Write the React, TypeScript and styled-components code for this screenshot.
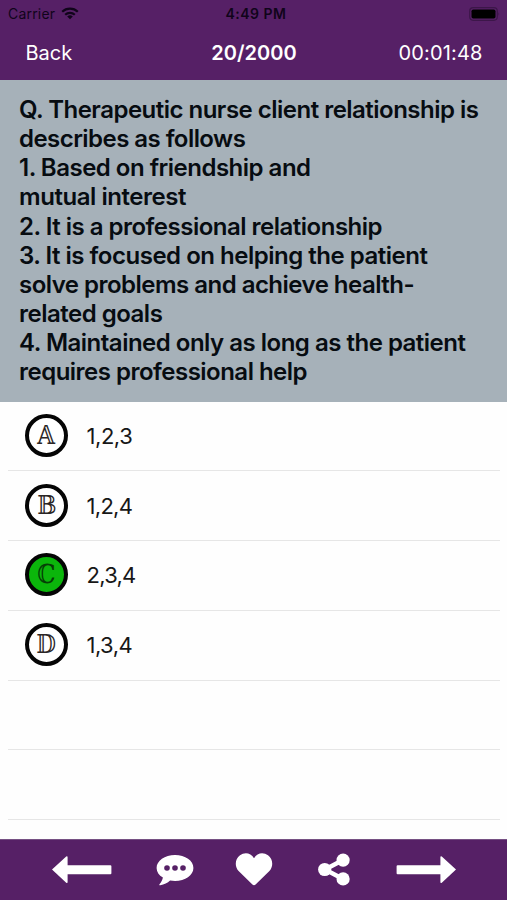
import React from 'react';
import styled, { createGlobalStyle, css } from 'styled-components';

const purple = '#562066';

const GlobalStyle = createGlobalStyle`
  * { box-sizing: border-box; }
  body { margin: 0; background: #fff; overflow: hidden; }
`;

const Screen = styled.main`
  width: 507px;
  height: 900px;
  display: flex;
  flex-direction: column;
  overflow: hidden;
  background: #fefefe;
  font-family: Inter, "Liberation Sans", sans-serif;
`;

const StatusBar = styled.header`
  flex: 0 0 27px;
  display: grid;
  grid-template-columns: 1fr auto 1fr;
  align-items: center;
  padding: 0 7px 0 8px;
  background: ${purple};
  color: #10041a;
  font-size: 14px;
`;

const Carrier = styled.div`
  display: flex;
  align-items: center;
  gap: 6px;
  letter-spacing: 0.2px;
`;

const Clock = styled.time`
  padding-left: 4px;
  font-weight: 600;
  letter-spacing: 0.5px;
`;

const Battery = styled.svg`
  justify-self: end;
  display: block;
`;

const NavBar = styled.nav`
  flex: 0 0 52.5px;
  display: grid;
  grid-template-columns: 1fr auto 1fr;
  align-items: center;
  padding: 0 24.5px 0 25.5px;
  background: ${purple};
  color: #fff;
  font-size: 20px;
`;

const BackButton = styled.button`
  justify-self: start;
  padding: 0;
  border: 0;
  background: none;
  color: inherit;
  font: inherit;
`;

const Progress = styled.h1`
  margin: 0;
  font-size: 20px;
  font-weight: 600;
  letter-spacing: 0.05px;
`;

const Timer = styled.time`
  justify-self: end;
  letter-spacing: 0.15px;
`;

const Question = styled.section`
  flex: 0 0 322px;
  padding: 15.5px 19px 0;
  background: #a6b1b9;
  color: #070c11;
  font-size: 24px;
  font-weight: 600;
  line-height: 29.15px;
`;

const QuestionLine = styled.div<{ $tracking: number }>`
  white-space: nowrap;
  letter-spacing: ${({ $tracking }) => $tracking}px;
`;

const AnswerList = styled.ul`
  flex: 1;
  min-height: 0;
  margin: 0;
  padding: 0 7px 0 8px;
  list-style: none;
  overflow: hidden;
`;

const AnswerRow = styled.li`
  height: 69.75px;
  display: flex;
  align-items: center;
  gap: 18.5px;
  padding: 0 0 1px 17px;
  border-bottom: 1px solid #e6e6e6;
`;

const Badge = styled.span<{ $selected: boolean }>`
  width: 43px;
  height: 43px;
  flex: none;
  display: flex;
  align-items: center;
  justify-content: center;
  border: 4px solid #050505;
  border-radius: 50%;
  background: #fff;
  color: #2b2626;
  font: 26px/35px "DejaVu Serif", serif;
  ${({ $selected }) =>
    $selected &&
    css`
      background: #0bb60b;
      color: #063f06;
    `}
`;

const Letter = styled.span`
  transform: scaleX(0.88);
`;

const AnswerText = styled.span<{ $tracking: number }>`
  padding-top: 1px;
  color: #171717;
  font-size: 22px;
  letter-spacing: ${({ $tracking }) => $tracking}px;
`;

const Toolbar = styled.footer`
  flex: 0 0 61.5px;
  display: flex;
  align-items: center;
  gap: 43.5px;
  padding: 0 0 0 51px;
  background: ${purple};
  border-top: 1px solid #765083;
`;

const ToolButton = styled.button`
  display: flex;
  padding: 0;
  border: 0;
  background: none;
  color: #fff;

  &:nth-child(3) { margin-left: -2.5px; }
  &:nth-child(4) { margin-left: 1.5px; }
  &:nth-child(5) { margin-left: 2.5px; }
`;

const questionLines: { text: string; tracking: number }[] = [
  { text: 'Q. Therapeutic nurse client relationship is', tracking: -0.51 },
  { text: 'describes as follows', tracking: -0.55 },
  { text: '1. Based on friendship and', tracking: -0.5 },
  { text: 'mutual interest', tracking: -0.454 },
  { text: '2. It is a professional relationship', tracking: -0.5 },
  { text: '3. It is focused on helping the patient', tracking: -0.487 },
  { text: 'solve problems and achieve health-', tracking: -0.52 },
  { text: 'related goals', tracking: -0.5 },
  { text: '4. Maintained only as long as the patient', tracking: -0.5 },
  { text: 'requires professional help', tracking: -0.51 },
];

const answers = [
  { letter: 'A', glyph: '𝔸', text: '1,2,3', tracking: -0.45 },
  { letter: 'B', glyph: '𝔹', text: '1,2,4', tracking: -0.7 },
  { letter: 'C', glyph: 'ℂ', text: '2,3,4', tracking: -0.75, selected: true },
  { letter: 'D', glyph: '𝔻', text: '1,3,4', tracking: -0.55 },
];

const WifiIcon = () => (
  <svg width="18" height="13" viewBox="0 0 18 13" fill="none" stroke="#10041a" strokeWidth="2.2">
    <path d="M1.2 4.7a11.2 11.2 0 0 1 15.6 0" />
    <path d="M4.2 7.8a7 7 0 0 1 9.6 0" />
    <path d="M9 12.2 6.2 9.6a4 4 0 0 1 5.6 0Z" fill="#10041a" stroke="none" />
  </svg>
);

const ArrowLeft = () => (
  <svg width="61" height="28" viewBox="0 0 61 28" fill="currentColor">
    <path d="M1 13.5 15.2.4q1.4-.8 1.4.8v8h42.8q1 0 1 1v7q0 1-1 1H16.6v7.9q0 1.5-1.4.6Z" />
  </svg>
);

const ArrowRight = () => (
  <svg width="61" height="28" viewBox="0 0 61 28" fill="currentColor">
    <path d="M60 13.5 45.8.4q-1.4-.8-1.4.8v8H1.6q-1 0-1 1v7q0 1 1 1h42.8v7.9q0 1.5 1.4.6Z" />
  </svg>
);

const CommentIcon = () => (
  <svg width="38" height="33" viewBox="0 0 38 33" fill="currentColor">
    <path d="M19 2C8.8 2 .6 7.7.6 15c0 4 2.4 7.3 6.3 9.6-.4 2.6-1.7 4.7-3.4 6.600-.5.7-.1 1.200.7 1 4-.7 7.300-2.400 9.900-4.800 1.600.3 3.200.5 4.900.5 10.200 0 18.400-5.700 18.400-13S29.200 2 19 2Z" />
    <g fill={purple}>
      <circle cx="11" cy="15" r="2.8" />
      <circle cx="19" cy="15" r="2.8" />
      <circle cx="27" cy="15" r="2.8" />
    </g>
  </svg>
);

const HeartIcon = () => (
  <svg width="38" height="33" viewBox="0 0 38 33" fill="currentColor">
    <path d="M19 5.2C15.8-.3 9.5-1 5 2.3-.1 6.1-.6 13.2 3.6 18L17.4 31.6q1.6 1.5 3.200 0L34.400 18c4.200-4.800 3.700-11.900-1.400-15.700C28.500-1 22.200-.3 19 5.200Z" />
  </svg>
);

const ShareIcon = () => (
  <svg width="32" height="33" viewBox="0 0 32 33" fill="currentColor">
    <path d="M25 7 7 16.5 25 26" fill="none" stroke="currentColor" strokeWidth="4.4" />
    <circle cx="6.7" cy="16.5" r="6.6" />
    <circle cx="25.1" cy="7.1" r="6.6" />
    <circle cx="25.1" cy="25.9" r="6.6" />
  </svg>
);

export default function App() {
  return (
    <Screen>
      <GlobalStyle />
      <StatusBar>
        <Carrier>
          Carrier
          <WifiIcon />
        </Carrier>
        <Clock>4:49 PM</Clock>
        <Battery width="31" height="14" viewBox="0 0 31 14">
          <rect x=".7" y=".7" width="27.6" height="12.6" rx="3.5" fill="none" stroke="#3c1649" strokeWidth="1.2" />
          <rect x="2.5" y="2.5" width="24" height="9" rx="1.8" fill="#000" />
          <path d="M29.5 5q1.3 2 0 4Z" fill="#3c1649" />
        </Battery>
      </StatusBar>
      <NavBar>
        <BackButton>Back</BackButton>
        <Progress>20/2000</Progress>
        <Timer>00:01:48</Timer>
      </NavBar>
      <Question>
        {questionLines.map(({ text, tracking }) => (
          <QuestionLine key={text} $tracking={tracking}>
            {text}
          </QuestionLine>
        ))}
      </Question>
      <AnswerList>
        {answers.map(({ letter, glyph, text, tracking, selected }) => (
          <AnswerRow key={letter}>
            <Badge $selected={!!selected} aria-label={letter}>
              <Letter>{glyph}</Letter>
            </Badge>
            <AnswerText $tracking={tracking}>{text}</AnswerText>
          </AnswerRow>
        ))}
        <AnswerRow />
        <AnswerRow />
      </AnswerList>
      <Toolbar>
        <ToolButton aria-label="Previous"><ArrowLeft /></ToolButton>
        <ToolButton aria-label="Comment"><CommentIcon /></ToolButton>
        <ToolButton aria-label="Favourite"><HeartIcon /></ToolButton>
        <ToolButton aria-label="Share"><ShareIcon /></ToolButton>
        <ToolButton aria-label="Next"><ArrowRight /></ToolButton>
      </Toolbar>
    </Screen>
  );
}
